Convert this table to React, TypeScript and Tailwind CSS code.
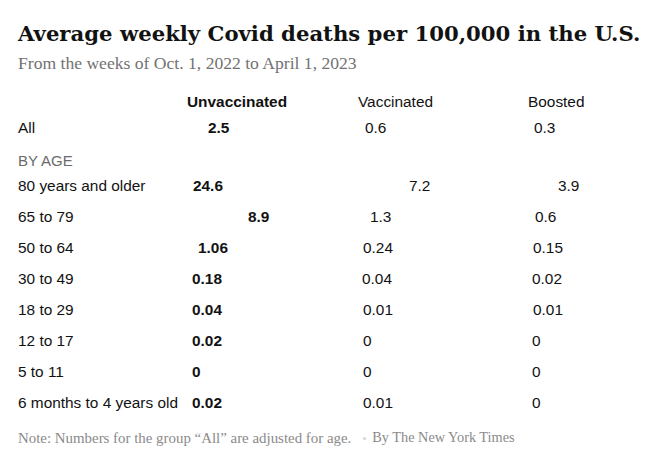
import React from "react";

type Cell = { v: string; ml: string };
type Row = { label: string; c: [Cell, Cell, Cell] };

const rows: Row[] = [
  { label: "80 years and older", c: [{ v: "24.6", ml: "ml-[6px]" }, { v: "7.2", ml: "ml-[51px]" }, { v: "3.9", ml: "ml-[30px]" }] },
  { label: "65 to 79", c: [{ v: "8.9", ml: "ml-[61px]" }, { v: "1.3", ml: "ml-[12px]" }, { v: "0.6", ml: "ml-[7px]" }] },
  { label: "50 to 64", c: [{ v: "1.06", ml: "ml-[11px]" }, { v: "0.24", ml: "ml-[5px]" }, { v: "0.15", ml: "ml-[5px]" }] },
  { label: "30 to 49", c: [{ v: "0.18", ml: "ml-[5px]" }, { v: "0.04", ml: "ml-[4px]" }, { v: "0.02", ml: "ml-[4px]" }] },
  { label: "18 to 29", c: [{ v: "0.04", ml: "ml-[5px]" }, { v: "0.01", ml: "ml-[5px]" }, { v: "0.01", ml: "ml-[5px]" }] },
  { label: "12 to 17", c: [{ v: "0.02", ml: "ml-[5px]" }, { v: "0", ml: "ml-[5px]" }, { v: "0", ml: "ml-[4px]" }] },
  { label: "5 to 11", c: [{ v: "0", ml: "ml-[5px]" }, { v: "0", ml: "ml-[5px]" }, { v: "0", ml: "ml-[4px]" }] },
  { label: "6 months to 4 years old", c: [{ v: "0.02", ml: "ml-[5px]" }, { v: "0.01", ml: "ml-[5px]" }, { v: "0", ml: "ml-[4px]" }] },
];

const grid = "grid grid-cols-[169px_171px_170px_1fr] items-center";

export default function App() {
  return (
    <div className="w-[672px] h-[468px] bg-white pl-[18px] pt-[19px] text-[#121212] overflow-hidden">
      <h1 className="font-['DejaVu_Serif',serif] font-bold text-[21.2px] leading-[30px] whitespace-nowrap">
        Average weekly Covid deaths per 100,000 in the U.S.
      </h1>
      <p className="mt-[3px] font-['Liberation_Serif',serif] text-[17.6px] leading-[22px] text-[#727272] whitespace-nowrap">
        From the weeks of Oct. 1, 2022 to April 1, 2023
      </p>
      <div className="mt-[15px] font-['Liberation_Sans',Arial,sans-serif] text-[15.4px]">
        <div className={`${grid} h-[26px]`}>
          <div />
          <div className="font-bold">Unvaccinated</div>
          <div>Vaccinated</div>
          <div>Boosted</div>
        </div>
        <div className={`${grid} h-[26px]`}>
          <div>All</div>
          <div className="font-bold ml-[21px]">2.5</div>
          <div className="ml-[7px]">0.6</div>
          <div className="ml-[6px]">0.3</div>
        </div>
        <div className="mt-[11px] h-[18px] leading-[18px] text-[15px] uppercase text-[#6b6b6b]">By age</div>
        {rows.map((r) => (
          <div key={r.label} className={`${grid} h-[31px]`}>
            <div className="whitespace-nowrap">{r.label}</div>
            <div className={`font-bold ${r.c[0].ml}`}>{r.c[0].v}</div>
            <div className={r.c[1].ml}>{r.c[1].v}</div>
            <div className={r.c[2].ml}>{r.c[2].v}</div>
          </div>
        ))}
      </div>
      <div className="mt-[10px] flex items-center h-[20px] font-['Liberation_Serif',serif] text-[14.9px] text-[#8a8a8a] whitespace-nowrap">
        <span>Note: Numbers for the group “All” are adjusted for age.</span>
        <span className="ml-[12px] mr-[6px] w-[3px] h-[3px] rounded-full bg-[#d6d6d6]" />
        <span className="text-[14.3px]">By The New York Times</span>
      </div>
    </div>
  );
}
